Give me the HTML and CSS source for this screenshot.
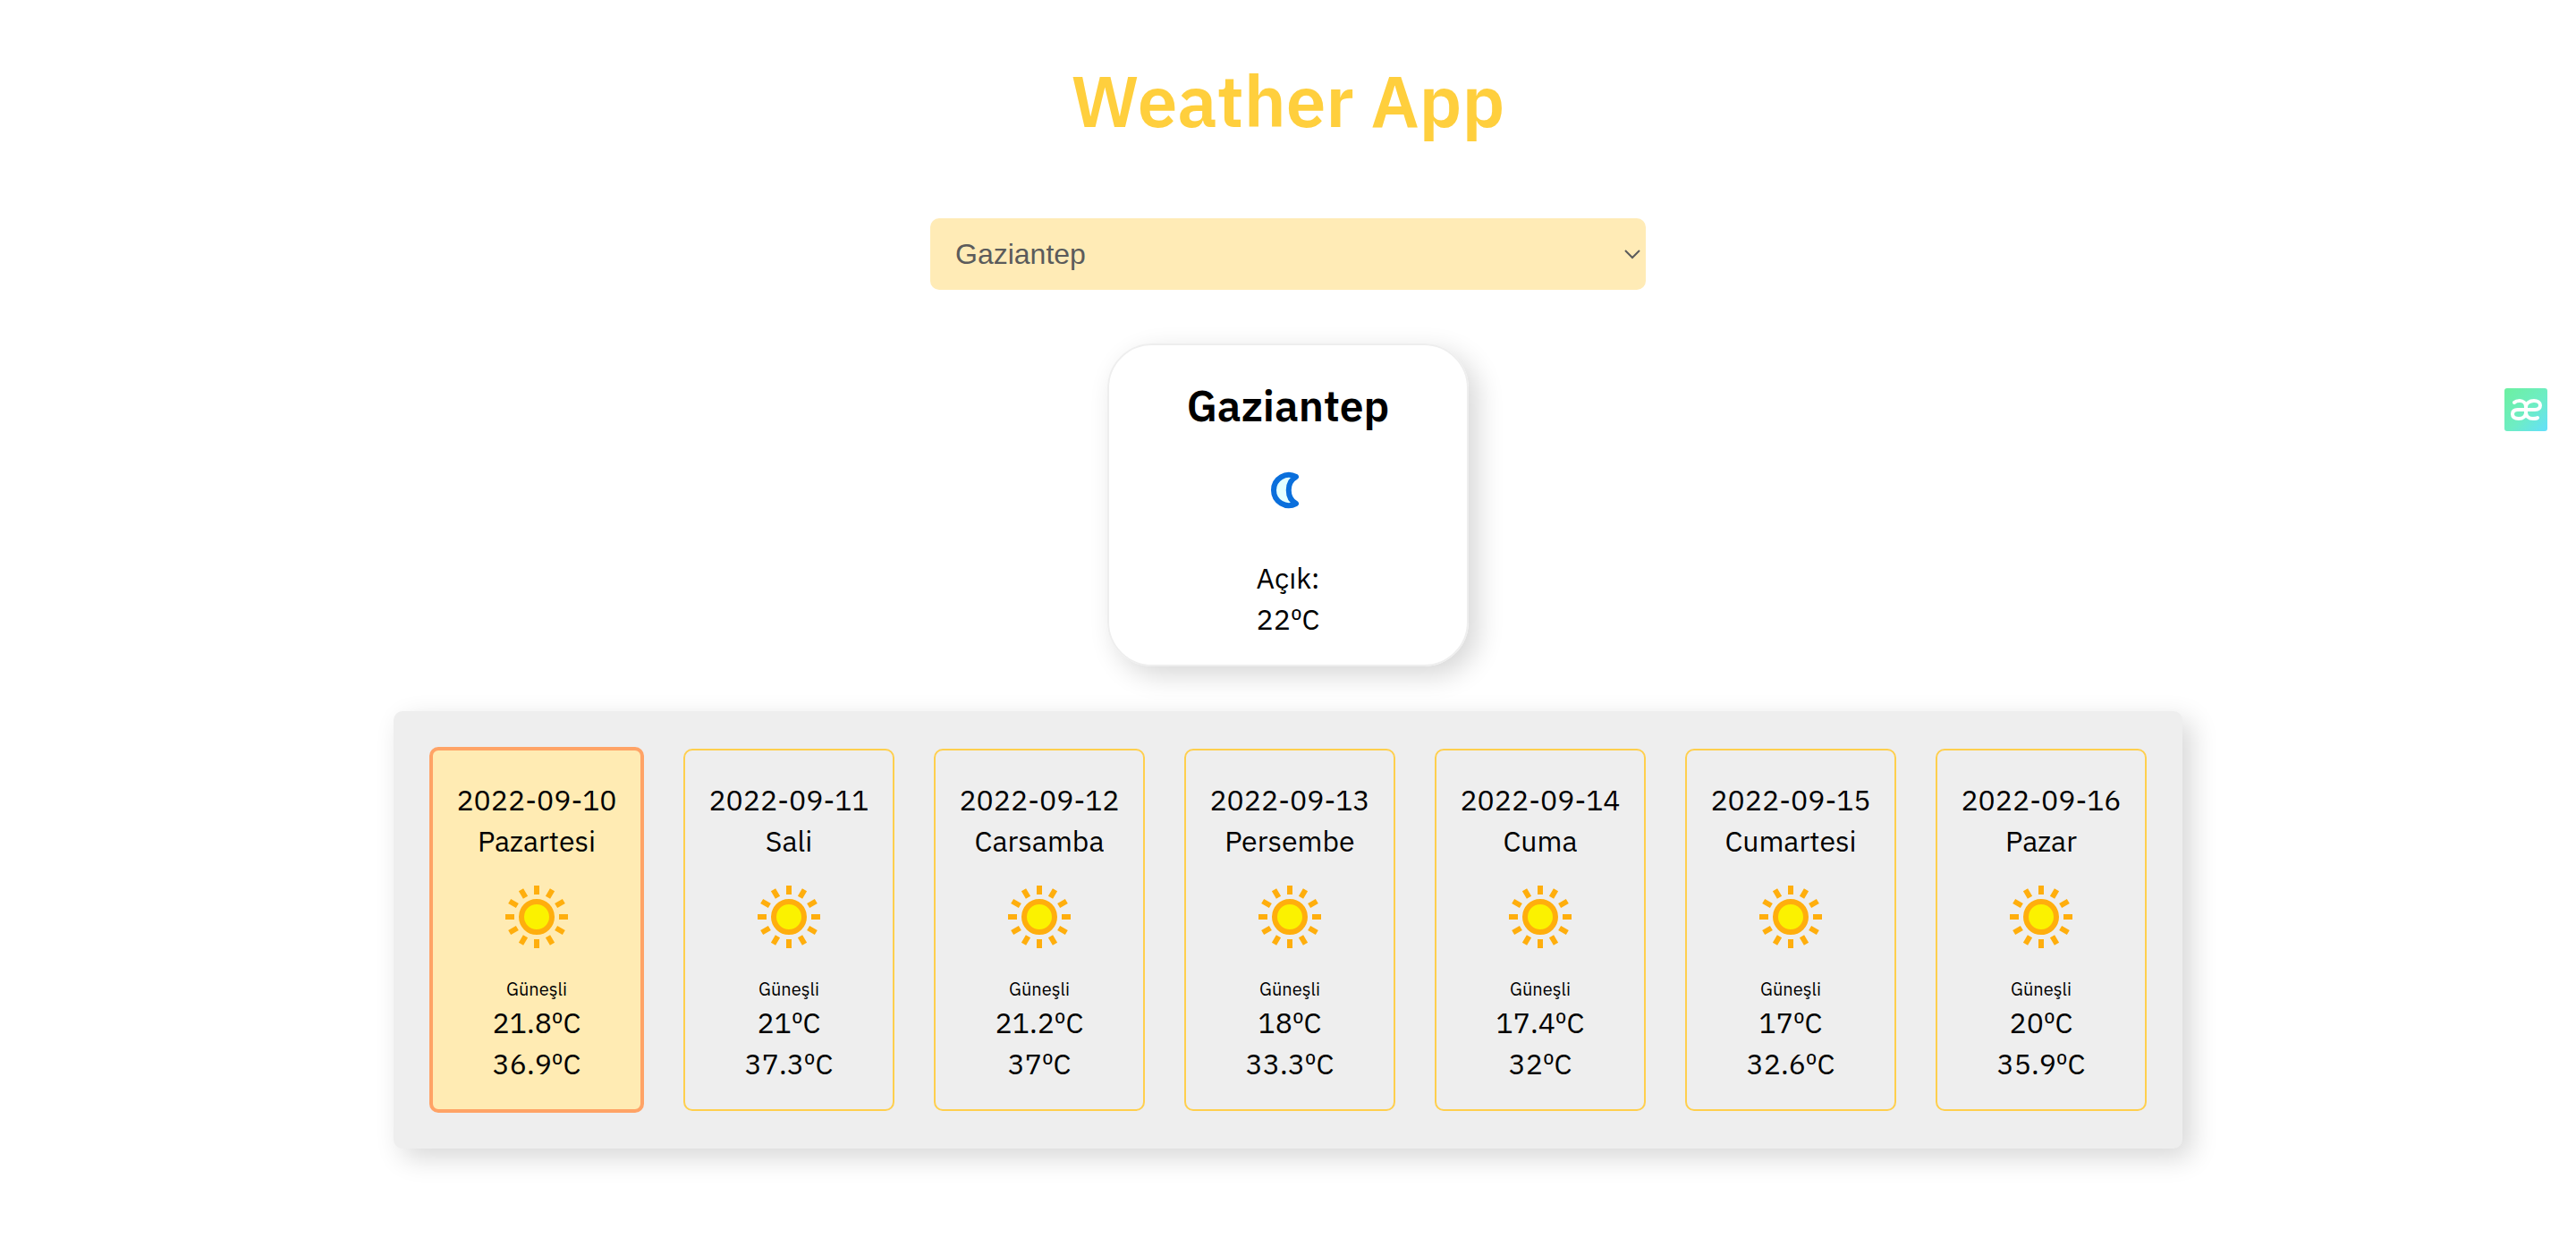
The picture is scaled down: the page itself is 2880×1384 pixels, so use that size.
FILE: index.html
```html
<!DOCTYPE html>
<html lang="tr">
<head>
  <meta charset="utf-8">
  <meta name="viewport" content="width=device-width, initial-scale=1">
  <title>Weather App</title>
  <link rel="stylesheet" href="styles.css">
</head>
<body>
  <svg width="0" height="0" class="sprite" aria-hidden="true">
    <symbol id="sun" viewBox="0 0 128 128">
      <circle cx="64" cy="62" r="17" fill="#fbf200" stroke="#ffae0d" stroke-width="6"/>
      <g stroke="#ffae0d" stroke-width="6">
        <path d="M64 27v10M64 87v10M29 62h10M89 62h10"/>
        <path d="M64 27v10M64 87v10M29 62h10M89 62h10" transform="rotate(30 64 62)"/>
        <path d="M64 27v10M64 87v10M29 62h10M89 62h10" transform="rotate(60 64 62)"/>
      </g>
    </symbol>
  </svg>

  <main class="app">
    <h1 class="app-title">Weather App</h1>

    <div class="city-picker">
      <select class="city-select" aria-label="Şehir">
        <option selected>Gaziantep</option>
      </select>
      <svg class="city-chevron" viewBox="0 0 18 12" aria-hidden="true"><path d="M1 2l8 8 8-8" fill="none" stroke="#5b5b5b" stroke-width="2"/></svg>
    </div>

    <section class="current">
      <h2 class="current-city">Gaziantep</h2>
      <svg class="weather-icon" viewBox="0 0 128 128" aria-hidden="true">
        <path d="M73 47A17 17 0 1 0 73 77C62 71 62 53 73 47Z" fill="#e4ffff" stroke="#0a6fdc" stroke-width="6" stroke-linejoin="round"/>
      </svg>
      <p class="line">Açık:</p>
      <p class="line">22ºC</p>
    </section>

    <section class="forecast">
      <article class="day day-active">
        <p class="line">2022-09-10</p><p class="line">Pazartesi</p>
        <svg class="weather-icon" aria-hidden="true"><use href="#sun"/></svg>
        <p class="condition">Güneşli</p><p class="line">21.8ºC</p><p class="line">36.9ºC</p>
      </article>
      <article class="day">
        <p class="line">2022-09-11</p><p class="line">Sali</p>
        <svg class="weather-icon" aria-hidden="true"><use href="#sun"/></svg>
        <p class="condition">Güneşli</p><p class="line">21ºC</p><p class="line">37.3ºC</p>
      </article>
      <article class="day">
        <p class="line">2022-09-12</p><p class="line">Carsamba</p>
        <svg class="weather-icon" aria-hidden="true"><use href="#sun"/></svg>
        <p class="condition">Güneşli</p><p class="line">21.2ºC</p><p class="line">37ºC</p>
      </article>
      <article class="day">
        <p class="line">2022-09-13</p><p class="line">Persembe</p>
        <svg class="weather-icon" aria-hidden="true"><use href="#sun"/></svg>
        <p class="condition">Güneşli</p><p class="line">18ºC</p><p class="line">33.3ºC</p>
      </article>
      <article class="day">
        <p class="line">2022-09-14</p><p class="line">Cuma</p>
        <svg class="weather-icon" aria-hidden="true"><use href="#sun"/></svg>
        <p class="condition">Güneşli</p><p class="line">17.4ºC</p><p class="line">32ºC</p>
      </article>
      <article class="day">
        <p class="line">2022-09-15</p><p class="line">Cumartesi</p>
        <svg class="weather-icon" aria-hidden="true"><use href="#sun"/></svg>
        <p class="condition">Güneşli</p><p class="line">17ºC</p><p class="line">32.6ºC</p>
      </article>
      <article class="day">
        <p class="line">2022-09-16</p><p class="line">Pazar</p>
        <svg class="weather-icon" aria-hidden="true"><use href="#sun"/></svg>
        <p class="condition">Güneşli</p><p class="line">20ºC</p><p class="line">35.9ºC</p>
      </article>
    </section>
  </main>

  <svg class="badge" viewBox="0 0 48 48" role="img" aria-label="æ">
    <defs>
      <linearGradient id="badge-fill" x1="0" y1="0" x2="1" y2="1">
        <stop offset="0" stop-color="#6cf0a0"/>
        <stop offset=".55" stop-color="#6eedc4"/>
        <stop offset="1" stop-color="#63dffc"/>
      </linearGradient>
    </defs>
    <rect width="48" height="48" rx="3" fill="url(#badge-fill)"/>
    <path d="M11 16C13 14 15 14 17 14C21 14 24 17 24 21V27C24 31 21 34 16 34C11 34 9 32 9 29C9 26 11 24 15 24H34C38 24 40 22 40 19C40 16 37 14 33 14C28 14 24 17 24 21M24 27C24 31 27 34 32 34C34 34 36 34 37 33" fill="none" stroke="#fff" stroke-width="4" stroke-linecap="round"/>
  </svg>
</body>
</html>
```
FILE: styles.css
```css
* {
  box-sizing: border-box;
}

body {
  margin: 0;
  background: #fff;
  color: #000;
  font-family: "IBM Plex Sans", Inter, sans-serif;
  font-size: 32px;
  line-height: 46px;
}

h1,
h2,
p {
  margin: 0;
}

.sprite {
  position: absolute;
}

.app {
  display: flex;
  flex-direction: column;
  align-items: center;
  padding: 60px 40px 100px;
}

.app-title {
  margin-bottom: 80px;
  color: #ffcf3d;
  font-size: 80px;
  font-weight: 600;
  line-height: 104px;
}

.city-picker {
  display: grid;
  align-items: center;
  width: 100%;
  max-width: 800px;
  margin-bottom: 60px;
}

.city-select {
  grid-area: 1 / 1;
  width: 100%;
  height: 80px;
  padding: 0 28px;
  border: 0;
  border-radius: 10px;
  background: #ffebb6;
  color: #5b5b5b;
  font-family: "Liberation Sans", Arial, sans-serif;
  font-size: 32px;
  appearance: none;
}

.city-chevron {
  grid-area: 1 / 1;
  justify-self: end;
  width: 18px;
  height: 12px;
  margin-right: 6px;
  pointer-events: none;
}

.current {
  display: flex;
  flex-direction: column;
  align-items: center;
  width: 404px;
  margin-bottom: 50px;
  padding: 34px 20px 28px;
  border: 2px solid #eee;
  border-radius: 50px;
  box-shadow: 10px 10px 30px rgba(0, 0, 0, 0.16);
}

.current-city {
  font-size: 48px;
  font-weight: 600;
  line-height: 66px;
}

.weather-icon {
  display: block;
  width: 128px;
  height: 128px;
}

.current .weather-icon {
  margin-bottom: 9px;
}

.forecast {
  display: flex;
  flex-wrap: wrap;
  align-items: center;
  justify-content: space-between;
  gap: 40px;
  width: 100%;
  max-width: 2000px;
  padding: 40px;
  border-radius: 10px;
  background: #eee;
  box-shadow: 10px 10px 30px rgba(0, 0, 0, 0.16);
}

.day {
  display: flex;
  flex-direction: column;
  align-items: center;
  width: 236px;
  padding: 32px 0 28px;
  border: 2px solid #ffcf4d;
  border-radius: 10px;
}

.day-active {
  width: 240px;
  border: 4px solid #ffa366;
  background: #ffebb3;
}

.condition {
  font-size: 20px;
  line-height: 29px;
}

.line {
  white-space: nowrap;
}

.badge {
  position: fixed;
  top: 434px;
  right: 32px;
  width: 48px;
  height: 48px;
}
```
